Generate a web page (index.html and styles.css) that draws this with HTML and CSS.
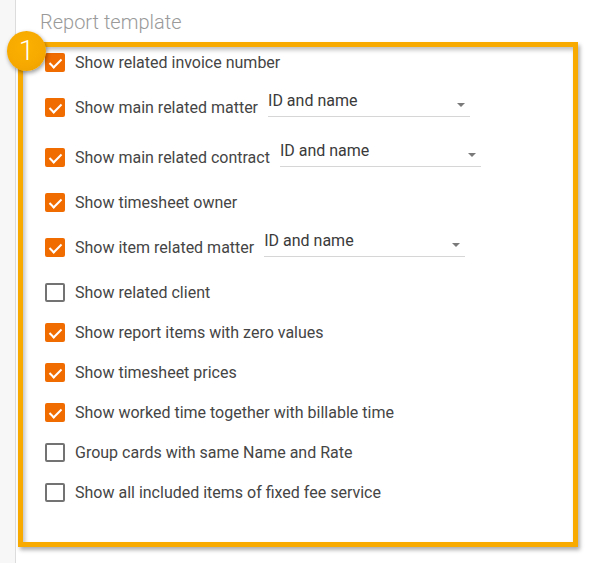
FILE: index.html
```html
<!DOCTYPE html>
<html>
<head>
<meta charset="utf-8">
<link rel="stylesheet" href="styles.css">
</head>
<body>
<div class="page">
  <div class="rail"></div>
  <div class="content">
    <div class="title">Report template</div>
    <div class="list">
      <div class="row"><span class="cb on"></span><span class="label">Show related invoice number</span></div>
      <div class="row tall"><span class="cb on"></span><span class="label">Show main related matter</span><span class="select s1"><span class="val">ID and name</span><span class="arrow"></span></span></div>
      <div class="row tall"><span class="cb on"></span><span class="label">Show main related contract</span><span class="select s2"><span class="val">ID and name</span><span class="arrow"></span></span></div>
      <div class="row"><span class="cb on"></span><span class="label">Show timesheet owner</span></div>
      <div class="row tall"><span class="cb on"></span><span class="label">Show item related matter</span><span class="select s3"><span class="val">ID and name</span><span class="arrow"></span></span></div>
      <div class="row"><span class="cb"></span><span class="label">Show related client</span></div>
      <div class="row"><span class="cb on"></span><span class="label">Show report items with zero values</span></div>
      <div class="row"><span class="cb on"></span><span class="label">Show timesheet prices</span></div>
      <div class="row"><span class="cb on"></span><span class="label">Show worked time together with billable time</span></div>
      <div class="row"><span class="cb"></span><span class="label">Group cards with same Name and Rate</span></div>
      <div class="row"><span class="cb"></span><span class="label">Show all included items of fixed fee service</span></div>
      <div class="frame"></div>
      <div class="badge">1</div>
    </div>
  </div>
</div>
</body>
</html>
```

FILE: styles.css
```css
html, body {
  margin: 0;
  padding: 0;
  background: #ffffff;
}
body {
  font-family: Roboto, "Liberation Sans", sans-serif;
  width: 613px;
  height: 563px;
  overflow: hidden;
}
.page {
  display: flex;
  height: 563px;
}
.rail {
  width: 15px;
  flex: none;
  background: #f7f7f7;
  border-right: 1px solid #dcdcdc;
}
.content {
  flex: 1;
  padding-left: 24px;
}
.title {
  font-size: 20px;
  font-weight: 300;
  color: #9a9a9a;
  height: 42px;
  line-height: 24px;
  padding-top: 10px;
  box-sizing: border-box;
}
.list {
  position: relative;
  margin-left: -24px;
  padding-left: 29px;
}
.row {
  display: flex;
  align-items: center;
  height: 40px;
}
.row.tall {
  height: 50px;
}
.cb {
  width: 20px;
  height: 19px;
  box-sizing: border-box;
  border: 2px solid #737373;
  border-radius: 2px;
  flex: none;
  position: relative;
  background: #fff;
}
.cb.on {
  background: #f06b00;
  border-color: #f06b00;
}
.cb.on::after {
  content: "";
  position: absolute;
  left: 5px;
  top: 1px;
  width: 5px;
  height: 10px;
  border-right: 2px solid #fff;
  border-bottom: 2px solid #fff;
  transform: rotate(45deg);
}
.label {
  margin-left: 10px;
  font-size: 16px;
  color: #454545;
  white-space: nowrap;
}
.select {
  position: relative;
  margin-left: 10px;
  height: 25px;
  border-bottom: 1px solid #d6d6d6;
  align-self: flex-start;
  margin-top: 10px;
  box-sizing: border-box;
  display: flex;
  align-items: flex-start;
}
.s1 { width: 202px; }
.s2 { width: 201px; }
.s3 { width: 201px; }
.val {
  font-size: 16px;
  color: #3a3a3a;
  line-height: 22px;
  margin-top: -2px;
}
.arrow {
  position: absolute;
  right: 5px;
  top: 11px;
  width: 0;
  height: 0;
  border-left: 4.5px solid transparent;
  border-right: 4.5px solid transparent;
  border-top: 4.5px solid #7a7a7a;
}
.frame {
  position: absolute;
  left: 2px;
  top: 0;
  width: 560px;
  height: 505px;
  box-sizing: border-box;
  border: 5px solid #f9aa00;
  box-shadow: 2px 3px 4px rgba(0, 0, 0, 0.32), inset 2px 3px 4px rgba(0, 0, 0, 0.25);
  pointer-events: none;
}
.badge {
  position: absolute;
  left: -9px;
  top: -11px;
  width: 39px;
  height: 40px;
  border-radius: 50%;
  background: radial-gradient(circle at 45% 40%, #fbb100 0%, #f6a800 60%, #e99d00 100%);
  box-shadow: 1px 2px 4px rgba(0, 0, 0, 0.4);
  color: #fff;
  font-size: 28px;
  line-height: 40px;
  text-align: center;
  font-weight: 300;
}
```
